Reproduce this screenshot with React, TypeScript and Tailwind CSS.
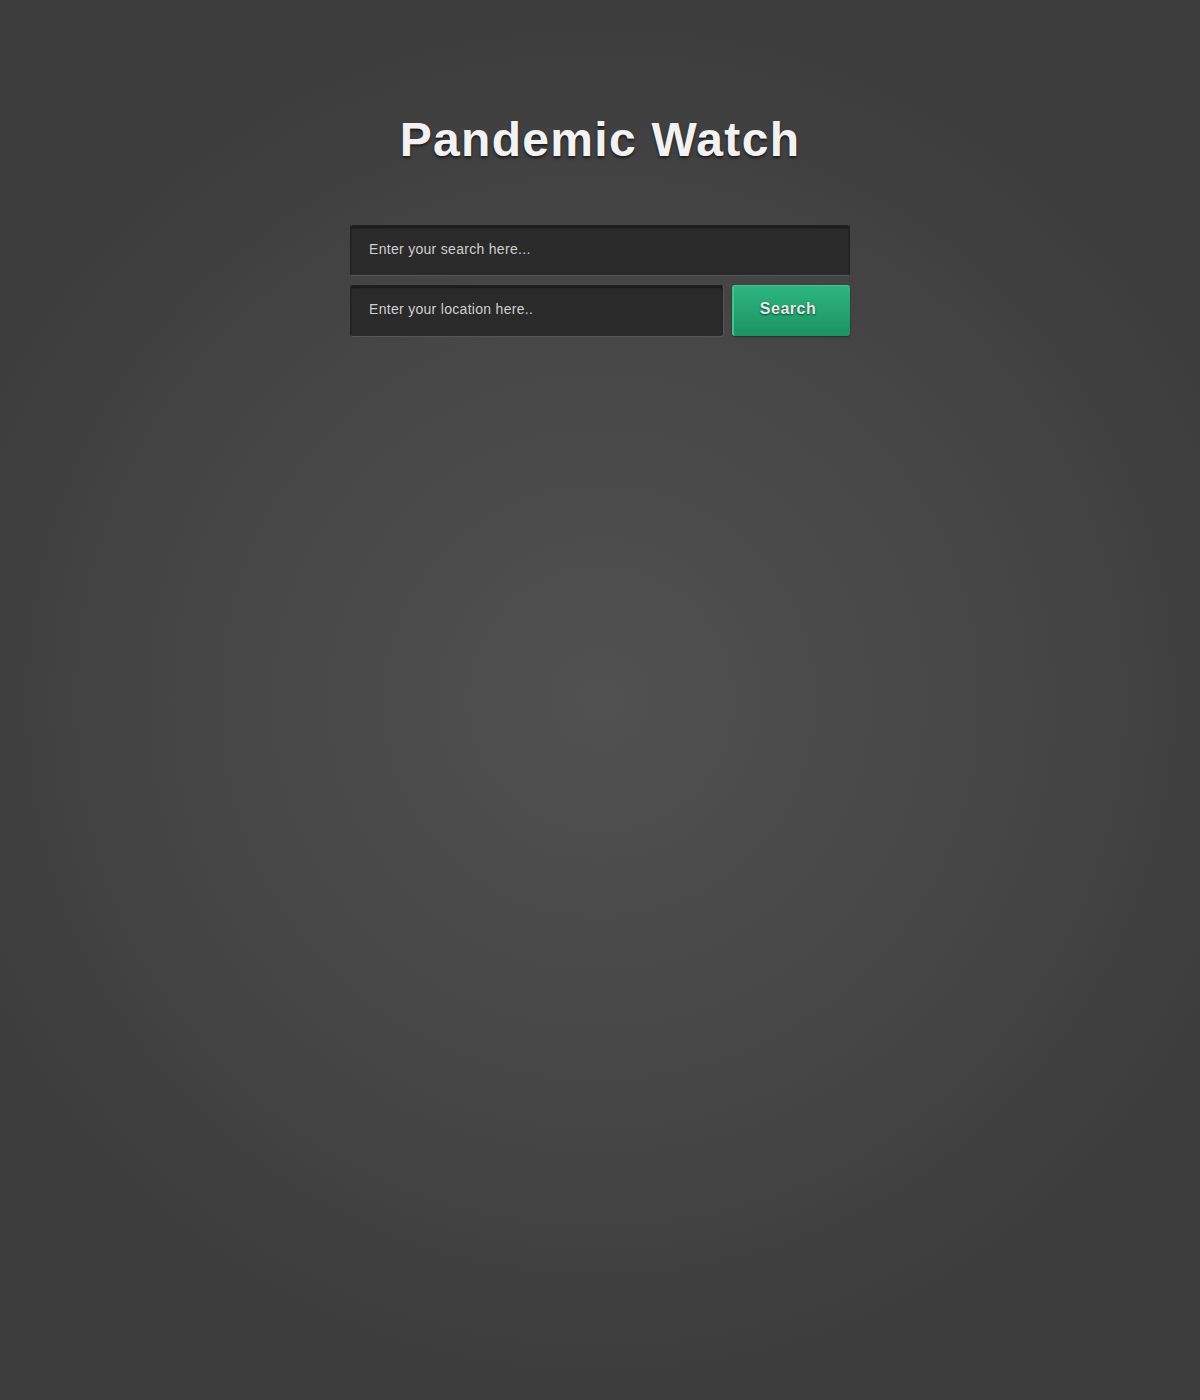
import React from "react";

export default function App() {
  return (
    <div
      className="w-full min-h-[1400px] flex flex-col items-center bg-[radial-gradient(circle_at_50%_50%,#515151_0%,#474747_40%,#3d3d3d_75%,#3c3c3c_100%)]"
      style={{ fontFamily: '"Liberation Sans", Arial, sans-serif' }}
    >
      <h1 className="mt-[110px] text-[48px] leading-[60px] font-bold tracking-[1.3px] text-[#f2f2f2] [text-shadow:0_2px_3px_rgba(0,0,0,0.6)]">
        Pandemic Watch
      </h1>
      <div className="mt-[55px] w-[500px] flex flex-col gap-[9px]">
        <input
          className="h-[51px] w-full rounded-[3px] bg-[#2a2a2a] border border-[#222] border-b-[#575757] px-[18px] pb-[4px] text-[14px] tracking-[0.3px] text-[#ddd] placeholder:text-[#cfcfcf] outline-none shadow-[inset_0_2px_2px_rgba(0,0,0,0.4)]"
          placeholder="Enter your search here..."
        />
        <div className="flex gap-[8px]">
          <input
            className="h-[52px] w-[374px] rounded-[3px] bg-[#2a2a2a] border border-[#222] border-b-[#575757] border-r-[#575757] px-[18px] pb-[4px] text-[14px] tracking-[0.3px] text-[#ddd] placeholder:text-[#cfcfcf] outline-none shadow-[inset_0_2px_2px_rgba(0,0,0,0.4)]"
            placeholder="Enter your location here.."
          />
          <button className="h-[51px] flex-1 rounded-[3px] bg-[linear-gradient(#2db67f,#1b9262)] border-t border-l-2 border-t-[#3fc48e] border-l-[#3fc48e] pr-[8px] pb-[4px] text-[16px] font-bold tracking-[0.5px] text-[#e6e6e6] [text-shadow:0_1px_2px_rgba(0,0,0,0.6)] shadow-[0_1px_2px_rgba(0,0,0,0.4)]">
            Search
          </button>
        </div>
      </div>
    </div>
  );
}
